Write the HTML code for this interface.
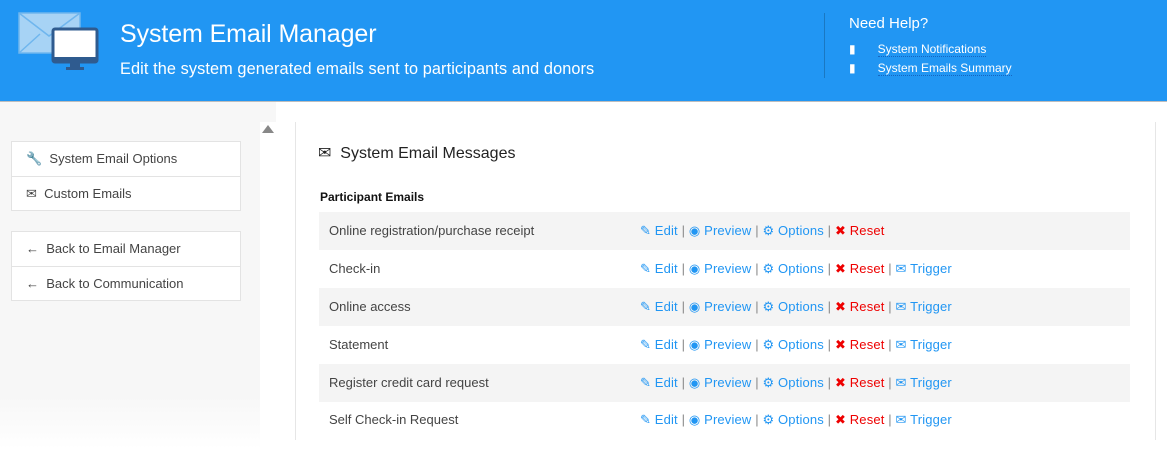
<!DOCTYPE html>
<html><head><meta charset="utf-8"><style>
*{margin:0;padding:0;box-sizing:border-box}
body{width:1167px;height:449px;overflow:hidden;font-family:"Liberation Sans",sans-serif;background:#fff;position:relative}
.hdr{position:absolute;left:0;top:0;width:1167px;height:102px;background:#2196f3;border-bottom:1px solid #bdbdbd;color:#fff}
.a{position:absolute}
.side{position:absolute;left:0;top:102px;width:260px;height:347px;background:linear-gradient(#f7f7f7 85%,#fff)}
.grp{position:absolute;left:11px;width:230px;background:#fff;border:1px solid #e3e3e3}
.grp div{height:34px;line-height:34px;font-size:13px;color:#444;padding-left:14px;border-top:1px solid #e3e3e3}
.grp div:first-child{border-top:none}
.panel{position:absolute;left:295px;top:122px;width:861px;height:318px;border-left:1px solid #e6e6e6;border-right:1px solid #e6e6e6}
.row{position:absolute;left:319px;width:811px;height:38px;font-size:13px;line-height:38px;color:#444}
.row.g{background:#f4f4f4}
.row .n{position:absolute;left:10px}
.row .l{position:absolute;left:321px;color:#2196f3;letter-spacing:0.15px}
.r{color:#e00}.s{color:#888}
</style></head><body>
<div class="hdr">
<svg class="a" style="left:18px;top:12px" width="82" height="60" viewBox="0 0 82 60">
<rect x="1" y="1" width="61" height="40" fill="#a7d3f5" stroke="#6fb6ee" stroke-width="1.5"/>
<path d="M1 1 L31 24 L62 1 M1 41 L22 22" stroke="#6fb6ee" stroke-width="1.5" fill="none"/>
<rect x="35" y="17" width="44" height="33" rx="2" fill="#fff" stroke="#2f5b8f" stroke-width="3"/>
<rect x="35" y="45" width="44" height="5" fill="#2f5b8f"/>
<rect x="52" y="50" width="10" height="5" fill="#2f5b8f"/><rect x="48" y="55" width="18" height="3" fill="#2f5b8f"/>
</svg>
<div class="a" style="left:120px;top:20px;font-size:25px;letter-spacing:-0.1px">System Email Manager</div>
<div class="a" style="left:120px;top:60px;font-size:16.3px;letter-spacing:0.1px">Edit the system generated emails sent to participants and donors</div>
<div class="a" style="left:824px;top:13px;width:1px;height:65px;background:#1a78c2"></div>
<div class="a" style="left:849px;top:15px;font-size:15px">Need Help?</div>
<div class="a" style="left:849px;top:40px;font-size:12px;line-height:19px">
<div>&#9646;<span style="margin-left:22px;border-bottom:1px dotted #1565c0">System Notifications</span></div>
<div>&#9646;<span style="margin-left:22px;border-bottom:1px dotted #1565c0">System Emails Summary</span></div>
</div>
</div>
<div class="side"></div>
<div class="a" style="left:260px;top:102px;width:16px;height:20px;background:#f7f7f7"></div>
<div class="a" style="left:262px;top:125px;width:0;height:0;border-left:6px solid transparent;border-right:6px solid transparent;border-bottom:8px solid #888"></div>
<div class="grp" style="top:141px"><div>🔧&nbsp; System Email Options</div><div>✉&nbsp; Custom Emails</div></div>
<div class="grp" style="top:231px"><div>←&nbsp; Back to Email Manager</div><div>←&nbsp; Back to Communication</div></div>
<div class="panel"></div>
<div class="a" style="left:318px;top:143px;font-size:16px;color:#222">✉&nbsp; System Email Messages</div>
<div class="a" style="left:320px;top:190px;font-size:12px;font-weight:bold;color:#111">Participant Emails</div>
<div class="row g" style="top:212px"><span class="n">Online registration/purchase receipt</span><span class="l">✎ Edit <span class="s">|</span> ◉ Preview <span class="s">|</span> ⚙ Options <span class="s">|</span> <span class="r">✖ Reset</span></span></div>
<div class="row" style="top:250px"><span class="n">Check-in</span><span class="l">✎ Edit <span class="s">|</span> ◉ Preview <span class="s">|</span> ⚙ Options <span class="s">|</span> <span class="r">✖ Reset</span> <span class="s">|</span> ✉ Trigger</span></div>
<div class="row g" style="top:288px"><span class="n">Online access</span><span class="l">✎ Edit <span class="s">|</span> ◉ Preview <span class="s">|</span> ⚙ Options <span class="s">|</span> <span class="r">✖ Reset</span> <span class="s">|</span> ✉ Trigger</span></div>
<div class="row" style="top:326px"><span class="n">Statement</span><span class="l">✎ Edit <span class="s">|</span> ◉ Preview <span class="s">|</span> ⚙ Options <span class="s">|</span> <span class="r">✖ Reset</span> <span class="s">|</span> ✉ Trigger</span></div>
<div class="row g" style="top:364px"><span class="n">Register credit card request</span><span class="l">✎ Edit <span class="s">|</span> ◉ Preview <span class="s">|</span> ⚙ Options <span class="s">|</span> <span class="r">✖ Reset</span> <span class="s">|</span> ✉ Trigger</span></div>
<div class="row" style="top:401px"><span class="n">Self Check-in Request</span><span class="l">✎ Edit <span class="s">|</span> ◉ Preview <span class="s">|</span> ⚙ Options <span class="s">|</span> <span class="r">✖ Reset</span> <span class="s">|</span> ✉ Trigger</span></div>
</body></html>
